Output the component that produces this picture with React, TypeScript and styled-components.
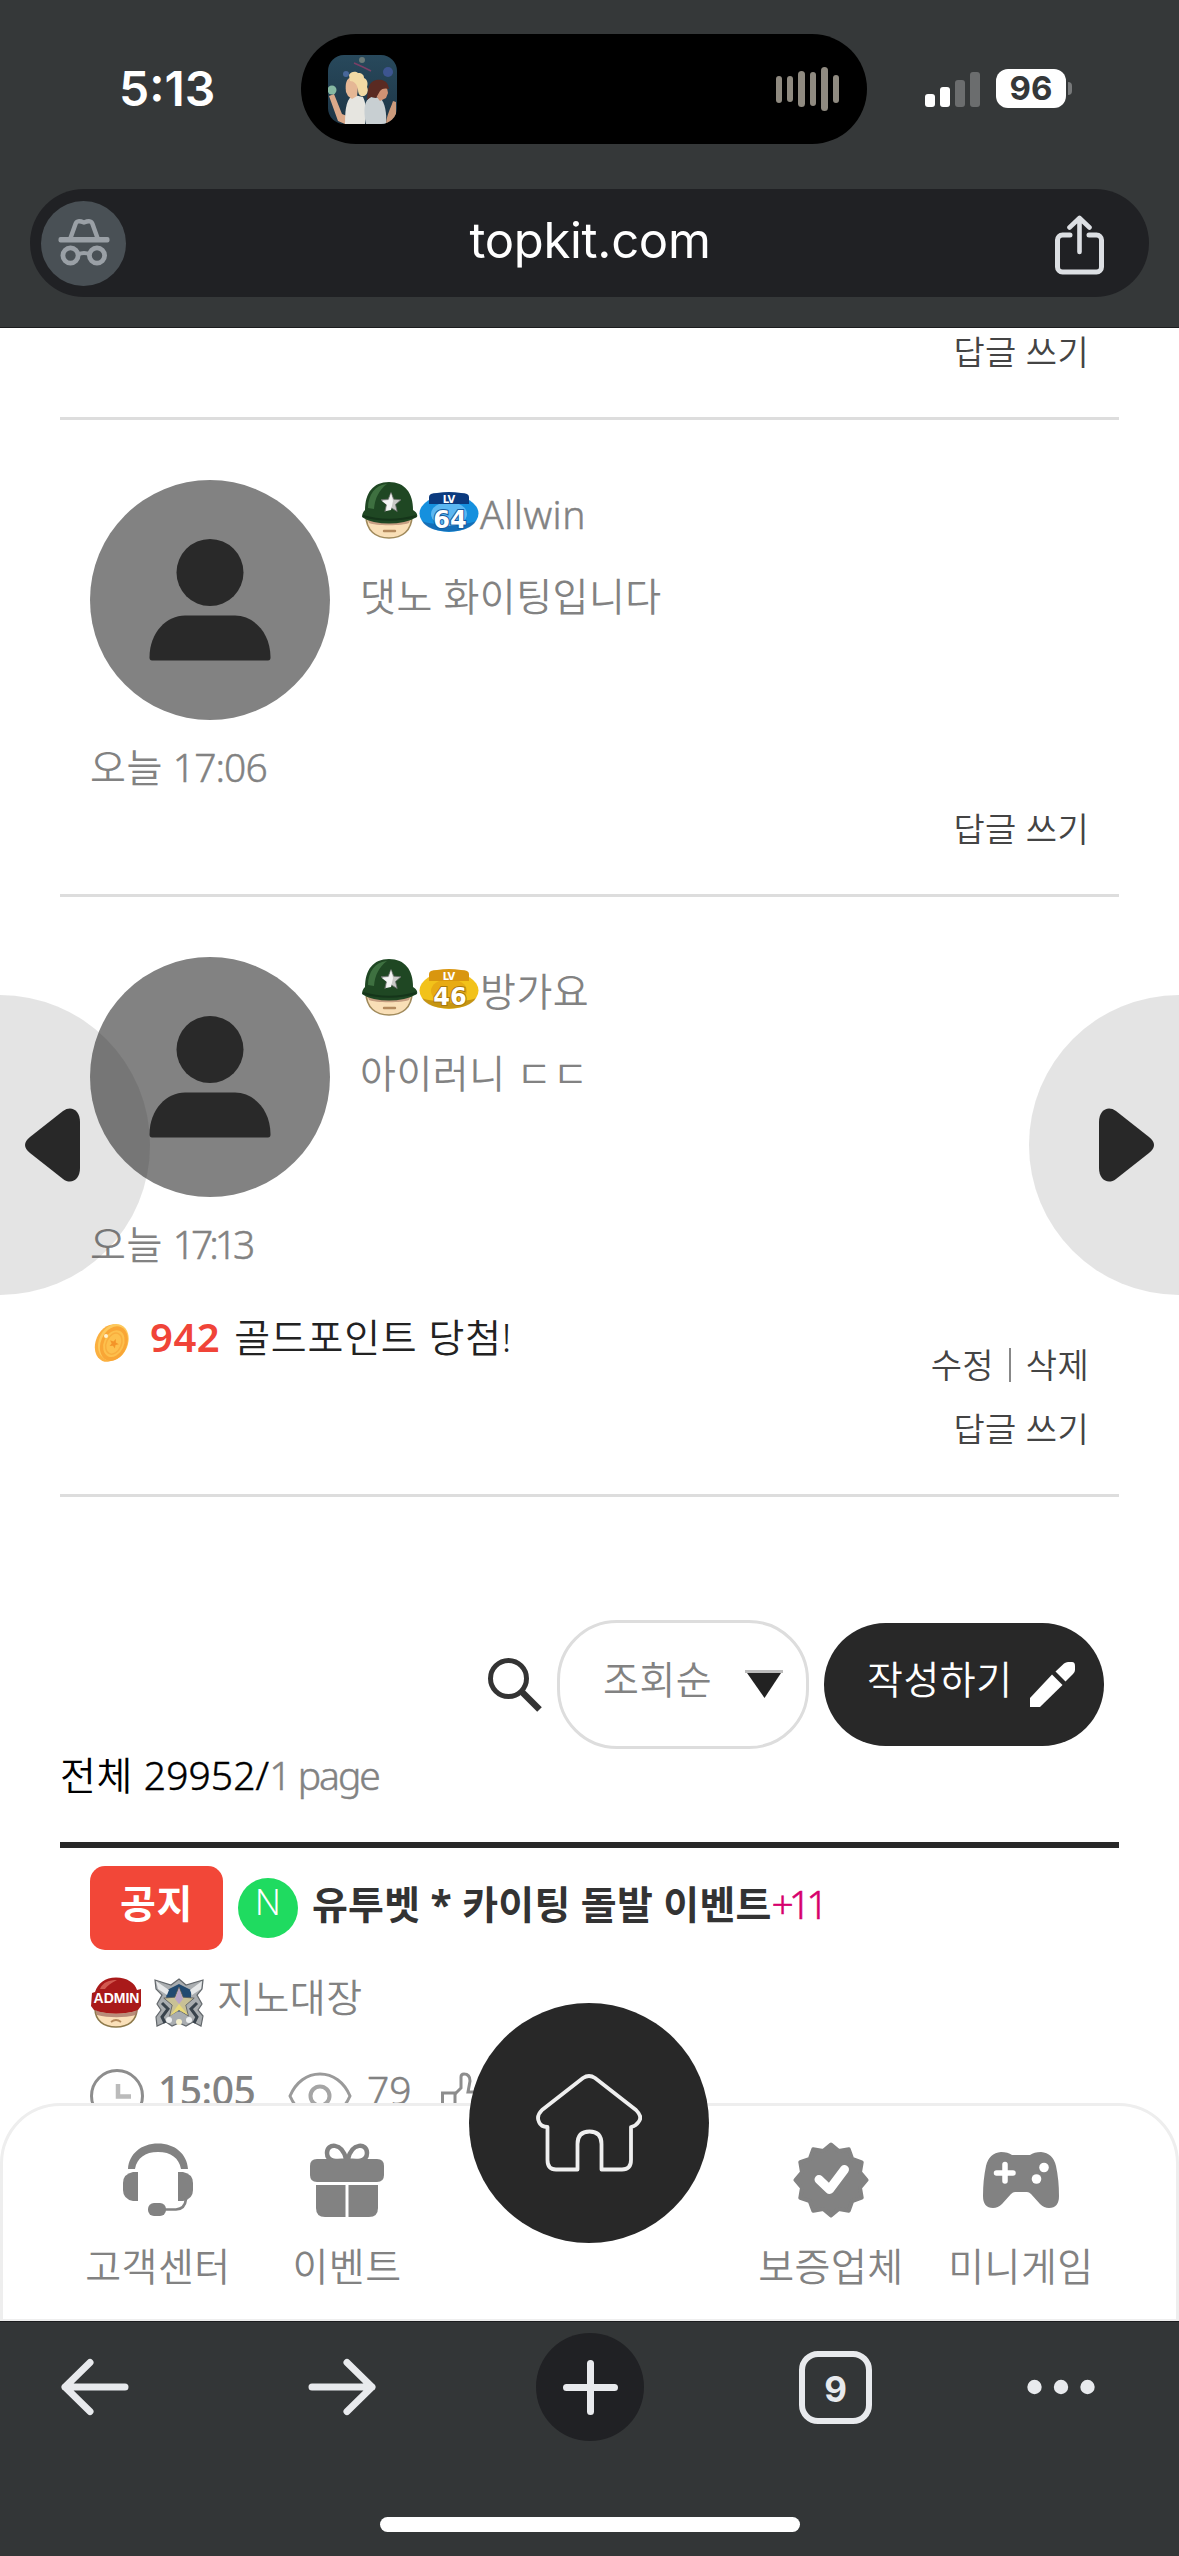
import React from 'react';
import styled, { createGlobalStyle } from 'styled-components';

const Global = createGlobalStyle`
  * { box-sizing: border-box; }
  html, body { margin: 0; padding: 0; background: #fff; }
  body { font-family: "Noto Sans", "Noto Sans CJK KR", sans-serif; }
  svg { display: block; flex: none; }
`;

const UI = `Inter, Roboto, sans-serif`;

const Screen = styled.div`
  position: relative;
  width: 1179px;
  height: 2556px;
  overflow: hidden;
  display: flex;
  flex-direction: column;
  background: #fff;
`;

/* ---------- browser header ---------- */
const Header = styled.header`
  flex: none;
  height: 328px;
  background: #353839;
  border-bottom: 1px solid #1b1c1e;
  padding: 34px 30px 0;
`;
const StatusRow = styled.div`
  display: flex;
  align-items: center;
  height: 110px;
`;
const Clock = styled.div`
  width: 271px;
  padding-left: 89px;
  font: 600 48px/60px ${UI};
  color: #fff;
`;
const Island = styled.div`
  width: 566px;
  height: 110px;
  border-radius: 55px;
  background: #000;
  display: flex;
  align-items: center;
  justify-content: space-between;
  padding: 0 28px 0 27px;
`;
const Wave = styled.div`
  display: flex;
  align-items: center;
  gap: 5px;
`;
const WaveBar = styled.i<{ $h: number }>`
  width: 6.4px;
  height: ${(p) => p.$h}px;
  border-radius: 4px;
  background: #8f8a80;
`;
const Signal = styled.div`
  display: flex;
  align-items: flex-end;
  gap: 5px;
  height: 35px;
  margin-left: 58px;
`;
const SignalBar = styled.i<{ $h: number; $on?: boolean }>`
  width: 10px;
  height: ${(p) => p.$h}px;
  border-radius: 3px;
  background: ${(p) => (p.$on ? '#fff' : '#6b6d6e')};
`;
const Battery = styled.div`
  width: 70px;
  height: 39px;
  margin: -2px 0 0 16px;
  border-radius: 12px;
  background: #fff;
  color: #353839;
  font: 700 33px/39px ${UI};
  text-align: center;
`;
const BatteryTip = styled.i`
  width: 4px;
  height: 13px;
  margin: -2px 0 0 2px;
  border-radius: 0 5px 5px 0;
  background: #77797a;
`;
const UrlBar = styled.div`
  margin-top: 45px;
  height: 108px;
  border-radius: 54px;
  background: #202124;
  display: flex;
  align-items: center;
  justify-content: space-between;
  padding: 0 44px 0 11px;
`;
const Incognito = styled.div`
  width: 85px;
  height: 85px;
  border-radius: 50%;
  background: #495055;
  display: flex;
  align-items: center;
  justify-content: center;
`;
const Url = styled.div`
  font: 400 49px/60px ${UI};
  letter-spacing: -0.3px;
  color: #fff;
  margin-bottom: 4px;
`;

/* ---------- page ---------- */
const Page = styled.main`
  flex: none;
  height: 1993px;
  overflow: hidden;
  padding: 0 60px;
`;
const Label = styled.span<{ $size?: number; $c?: string; $w?: number; $ls?: number; $lh?: number; $up?: number }>`
  display: block;
  white-space: pre;
  font-size: ${(p) => p.$size ?? 39}px;
  font-weight: ${(p) => p.$w ?? 350};
  letter-spacing: ${(p) => p.$ls ?? 0.5}px;
  line-height: ${(p) => (p.$lh ?? 60) - 2 * (p.$up ?? 1.5)}px;
  padding-bottom: ${(p) => 2 * (p.$up ?? 1.5)}px;
  color: ${(p) => p.$c ?? '#828282'};
`;
/* the light Latin cut is thinner than the Hangul beside it */
const Latin = styled(Label)`
  -webkit-text-stroke: 0.5px currentColor;
`;
const Divided = styled.section`
  border-bottom: 3px solid #ddd;
  padding: 0 30px 34px;
`;
const PrevComment = styled(Divided)`
  padding-bottom: 39px;
`;
const Comment = styled(Divided)`
  padding-top: 60px;
`;
const CommentBody = styled.div`
  display: flex;
  gap: 30px;
  height: 240px;
`;
const Avatar = styled.div`
  width: 240px;
  height: 240px;
  border-radius: 50%;
  background: #828282;
  display: flex;
  justify-content: center;
  padding-top: 59px;
`;
const CommentText = styled.div`
  display: flex;
  flex-direction: column;
  gap: 27px;
`;
const Author = styled.div`
  display: flex;
  align-items: center;
  height: 60px;
  padding-left: 1px;
  & > span { padding-top: 10px; }
`;
const Time = styled.div`
  display: flex;
  gap: 10px;
  margin-top: 18px;
  height: 60px;
`;
const Footer = styled.div<{ $top: number }>`
  margin-top: ${(p) => p.$top}px;
  display: flex;
  justify-content: space-between;
  align-items: flex-start;
`;
const Points = styled.div`
  display: flex;
  align-items: center;
  height: 60px;
  padding-left: 3px;
`;
const Won = styled(Label)`
  margin: 0 14px 0 18px;
`;
const Actions = styled.div<{ $top?: number }>`
  margin-left: auto;
  padding-top: ${(p) => p.$top ?? 0}px;
  display: flex;
  flex-direction: column;
  align-items: flex-end;
  gap: 4px;
`;
const EditRow = styled.div`
  display: flex;
  align-items: center;
  height: 60px;
`;
const Bar = styled.i`
  width: 2px;
  height: 34px;
  margin: 0 15px 2px;
  background: #888;
`;
const Action: React.FC<{ children: string; lh?: number }> = ({ children, lh }) => (
  <Label $size={34} $c="#444" $lh={lh} $up={0.5} $ls={0.3}>{children}</Label>
);

const Tools = styled.div`
  margin-top: 123px;
  display: flex;
  justify-content: flex-end;
  align-items: center;
  gap: 15px;
  height: 129px;
  padding-right: 15px;
`;
const Select = styled.div`
  width: 252px;
  height: 129px;
  border: 3px solid #ddd;
  border-radius: 60px;
  display: flex;
  align-items: center;
  justify-content: space-between;
  padding: 0 23px 0 43px;
  & > span { margin-top: -10px; }
`;
const WriteButton = styled.div`
  width: 280px;
  height: 123px;
  border-radius: 62px;
  background: #282828;
  display: flex;
  align-items: center;
  justify-content: space-between;
  padding: 0 29px 0 43px;
  & > span { margin-top: -10px; }
`;
const Count = styled.div`
  display: flex;
  height: 52px;
`;
const Total = styled(Label)`
  margin-right: 11px;
`;
const Post = styled.article`
  margin-top: 41px;
  border-top: 6px solid #282828;
  padding: 18px 30px 0;
`;
const PostTitle = styled.div`
  display: flex;
  align-items: center;
  height: 84px;
`;
const Notice = styled.div`
  width: 133px;
  height: 84px;
  border-radius: 15px;
  background: #f24738;
  display: flex;
  justify-content: center;
  padding-top: 8px;
`;
const NewMark = styled.div`
  width: 60px;
  height: 60px;
  margin: 0 14px 0 15px;
  border-radius: 50%;
  background: #1fdb60;
  display: flex;
  justify-content: center;
`;
const TitleText = styled.div`
  display: flex;
  margin-top: -7px;
`;
const PostAuthor = styled.div`
  display: flex;
  align-items: center;
  margin-top: 27px;
  height: 51px;
  padding-left: 1px;
  gap: 12px;
  & > span { margin-top: -10px; }
`;
const Stats = styled.div`
  display: flex;
  margin-top: 41px;
  height: 54px;
`;
const Posted = styled(Label)`
  width: 108px;
  margin-left: 14px;
`;

/* ---------- overlays ---------- */
const SideArrow = styled.div<{ $right?: boolean }>`
  position: absolute;
  top: 995px;
  ${(p) => (p.$right ? 'right: -150px;' : 'left: -150px;')}
  width: 300px;
  height: 300px;
  border-radius: 50%;
  background: rgba(40, 40, 40, 0.125);
  display: flex;
  align-items: center;
  justify-content: ${(p) => (p.$right ? 'flex-start' : 'flex-end')};
  padding: 0 70px;
`;
const SiteNav = styled.nav`
  position: absolute;
  left: 0;
  top: 2103px;
  width: 1179px;
  height: 218px;
  background: #fff;
  border: 3px solid #eee;
  border-bottom-width: 2px;
  border-radius: 60px 60px 0 0;
  display: flex;
  justify-content: space-between;
  padding: 36px 60px 0 61px;
`;
const NavGroup = styled.div<{ $gap: number }>`
  display: flex;
  gap: ${(p) => p.$gap}px;
`;
const NavItem = styled.div<{ $w: number }>`
  width: ${(p) => p.$w}px;
  display: flex;
  flex-direction: column;
  align-items: center;
  gap: 19px;
`;
const HomeButton = styled.div`
  position: absolute;
  left: 469px;
  top: 2003px;
  width: 240px;
  height: 240px;
  border-radius: 50%;
  background: #282828;
  display: flex;
  align-items: center;
  justify-content: center;
`;

/* ---------- browser footer ---------- */
const BrowserBar = styled.footer`
  flex: none;
  height: 235px;
  background: #333637;
  border-top: 1px solid #1b1c1e;
  display: flex;
  flex-direction: column;
  align-items: center;
`;
const BrowserTools = styled.div`
  width: 100%;
  height: 108px;
  margin-top: 11px;
  padding-left: 60px;
  display: flex;
  align-items: center;
  gap: 155px;
`;
const ArrowSvg = styled.svg<{ $after: number }>`
  margin-right: ${(p) => p.$after}px;
`;
const PlusCircle = styled.div`
  width: 108px;
  height: 108px;
  border-radius: 50%;
  background: #202124;
  display: flex;
  align-items: center;
  justify-content: center;
`;
const Tabs = styled.div`
  width: 73px;
  height: 73px;
  border: 6px solid #e8eaed;
  border-radius: 19px;
  color: #e8eaed;
  font: 700 35px/64px ${UI};
  text-align: center;
`;
const HomeIndicator = styled.div`
  width: 420px;
  height: 15px;
  margin-top: 76px;
  border-radius: 8px;
  background: #fff;
`;

/* ---------- drawings ---------- */
const AlbumArt = () => (
  <svg width="69" height="69" viewBox="0 0 69 69">
    <defs>
      <clipPath id="art"><rect width="69" height="69" rx="16" /></clipPath>
      <linearGradient id="sky" x1="0" y1="0" x2="0" y2="1">
        <stop offset="0" stopColor="#28495c" /><stop offset="1" stopColor="#1d3546" />
      </linearGradient>
    </defs>
    <g clipPath="url(#art)">
      <rect width="69" height="69" fill="url(#sky)" />
      <circle cx="34" cy="5" r="3" fill="#6b7a78" />
      <circle cx="60" cy="17" r="5" fill="#3d5590" />
      <circle cx="18" cy="19" r="3" fill="#48679a" />
      <path d="M26 8l9 4 8 4" stroke="#7b3f66" strokeWidth="1.6" fill="none" />
      <path d="M1 41l5-2 8 20 5 2-2 8-7-3z" fill="#dba98a" />
      <circle cx="4" cy="35" r="4.5" fill="#86b8a2" />
      <path d="M17 69c0-18 2-26 9-29l9 2c4 8 3 18 2 27z" fill="#e6e5e0" />
      <path d="M38 69c-3-14-2-24 5-27l9 1c5 4 7 16 6 26z" fill="#c8cfd2" />
      <path d="M58 69c1-10 4-14 7-23l3 1v21z" fill="#cc9a7b" />
      <path d="M18 37c-1-8 0-14 6-15l7 2-2 17-5 3-4-3z" fill="#e5b795" />
      <path d="M21 20c2-4 7-4 9-2 4 0 6 2 6 5 4 2 4 6 3 9 2 4 0 8-3 9-5 1-6-3-6-7-1-5-4-8-8-8z" fill="#f1d9a4" />
      <path d="M48 33h11l1 5-2 5-6 3-4-5z" fill="#cf9274" />
      <path d="M39 45c1-11 1-18 9-20 7-1 12 1 13 9-3-1-7-1-9 2l-4 7-5-1z" fill="#5a2a22" />
    </g>
  </svg>
);

const IncognitoIcon = () => (
  <svg width="52" height="50" viewBox="0 0 52 50" fill="none" stroke="#9aa0a6">
    <path d="M12.500 20l5-14c1-3 3.500-3.500 8.500-1.500 5-2 7.500-1.500 8.500 1.500l5 14" strokeWidth="4.400" strokeLinejoin="round" />
    <rect x="0.500" y="19" width="51" height="5.500" rx="2" fill="#9aa0a6" stroke="none" />
    <circle cx="12.500" cy="37.500" r="7.600" strokeWidth="4.800" />
    <circle cx="39" cy="37.500" r="7.600" strokeWidth="4.800" />
    <path d="M20 36.500c4-2 8-2 12 0" strokeWidth="4" />
  </svg>
);

const ShareSvg = styled.svg`margin-top: 4px;`;
const ShareIcon = () => (
  <ShareSvg width="51" height="60" viewBox="0 0 51 60" fill="none" stroke="#dcdfe3" strokeWidth="5" strokeLinecap="round" strokeLinejoin="round">
    <path d="M16 20H8.500a5 5 0 0 0-5 5V52a5 5 0 0 0 5 5H42.500a5 5 0 0 0 5-5V25a5 5 0 0 0-5-5H35" />
    <path d="M25.500 37V4M15.500 12.500L25.500 3l10 9.500" strokeWidth="4.600" />
  </ShareSvg>
);

const Person = () => (
  <svg width="122" height="122" viewBox="0 0 122 122" fill="#292929">
    <circle cx="61" cy="33.500" r="33.500" />
    <path d="M3 121.500Q.500 121.500.500 118.500C.500 93 18 76.500 36 76.500H86c18 0 35.500 16.500 35.500 42q0 3-2.500 3z" />
  </svg>
);

const Star: React.FC<{ cx: number; cy: number; r: number; fill: string; stroke?: string }> = ({ cx, cy, r, fill, stroke }) => {
  const pts = Array.from({ length: 10 }, (_, i) => {
    const a = -Math.PI / 2 + (i * Math.PI) / 5;
    const q = i % 2 ? r * 0.45 : r;
    return `${(cx + q * Math.cos(a)).toFixed(1)},${(cy + q * Math.sin(a)).toFixed(1)}`;
  }).join(' ');
  return <polygon points={pts} fill={fill} stroke={stroke} strokeWidth="0.8" />;
};

const SoldierIcon = () => (
  <svg width="57" height="58" viewBox="0 0 57 58">
    <path d="M5 34c0 16 10 23 23 23s23-7 23-23z" fill="#f9dfb7" stroke="#a08a5c" strokeWidth="1.600" />
    <path d="M6 36h44l-2 6c-6 3-34 3-40 0z" fill="#b58a72" opacity="0.75" />
    <path d="M4 29C4 12 12 1 28 1s24 11 24 28c3 2 5 4 4 7-4 2-8 4-13 5-10 2-20 2-30 0-5-1-9-3-12-5 0-3 1-5 3-7z" fill="#1f4723" />
    <path d="M7 27C7 14 14 4 26 3 18 9 14 17 13 28z" fill="#3e7040" />
    <path d="M2 35c16 5 36 5 53 0" stroke="#15351a" strokeWidth="2" fill="none" />
    <Star cx={30} cy={22} r={10.5} fill="#c9c9c7" stroke="#6b6f6c" />
    <path d="M30 12l2 8-2 9-5 1 1-6-5-4 7-1z" fill="#f4f4f4" />
    <path d="M23 50h11" stroke="#b48a5e" strokeWidth="2.400" strokeLinecap="round" />
  </svg>
);

const LevelSvg = styled.svg`
  margin: 4px 1px 0 1px;
`;
const LevelIcon: React.FC<{ level: number; dark: string; mid: string; light: string; edge: string }> = ({ level, dark, mid, light, edge }) => (
  <LevelSvg width="60" height="40" viewBox="0 0 60 40">
    <ellipse cx="30" cy="21.500" rx="29.500" ry="18.500" fill={mid} />
    <path d="M3 29C10 43 50 43 57 29C45 34 15 34 3 29z" fill={edge} opacity="0.600" />
    <ellipse cx="30" cy="22" rx="18" ry="12" fill={light} />
    <path d="M10 12V5Q10 1 18 1Q30-1 42 1Q50 1 50 5V12z" fill={dark} />
    <text x="30" y="10.500" textAnchor="middle" fontFamily="DejaVu Sans, sans-serif" fontWeight="700" fontSize="10" fill="#fff">LV</text>
    <text x="31" y="35.500" textAnchor="middle" fontFamily="DejaVu Sans, sans-serif" fontWeight="700" fontSize="24" fill="#fff" stroke={edge} strokeWidth="2" paintOrder="stroke">{level}</text>
  </LevelSvg>
);

const CoinSvg = styled.svg`margin-top: 10px;`;
const Coin = () => (
  <CoinSvg width="39" height="42" viewBox="0 0 39 42">
    <g transform="rotate(24 19.500 21)">
      <ellipse cx="17.500" cy="22" rx="14.500" ry="19.500" fill="#fbb040" />
      <ellipse cx="20" cy="20" rx="14.500" ry="19" fill="#fdc95c" />
      <ellipse cx="21" cy="21" rx="13" ry="18" fill="#f9a636" />
      <ellipse cx="21" cy="21" rx="10" ry="14" fill="#fdc04d" />
      <ellipse cx="21" cy="21" rx="7.500" ry="11" fill="none" stroke="#f9ae3e" strokeWidth="1.500" />
      <Star cx={21} cy={21} r={5} fill="#f49428" />
    </g>
    <circle cx="13" cy="14" r="2" fill="#fff3d0" />
  </CoinSvg>
);

const SearchIcon = () => (
  <svg width="54" height="54" viewBox="0 0 54 54" fill="none" stroke="#333">
    <circle cx="20.500" cy="20.500" r="18" strokeWidth="5" />
    <path d="M34.500 34.500L51.500 51.500" strokeWidth="6.500" />
  </svg>
);

const DownArrow = () => (
  <svg width="38" height="29" viewBox="0 0 38 29">
    <path d="M1 1.500H37L19.500 28z" fill="#222" />
    <rect x="0" y="0" width="38" height="3" fill="#bbb" />
  </svg>
);

const Pencil = () => (
  <svg width="45" height="45" viewBox="0 0 45 45" fill="#fff">
    <path d="M0 45V36L22 12.500L32.500 23L10 45z" />
    <path d="M25.500 9.500L34 1.500Q36 0 38 0H42Q45 0 45 4V8Q45 10 43 12L35.500 19.500z" />
  </svg>
);

const AdminIcon = () => (
  <svg width="51" height="51" viewBox="0 0 51 51">
    <path d="M4 31c0 13 9 19 21 19s21-6 21-19z" fill="#fae0b9" stroke="#8e7a4c" strokeWidth="1.600" />
    <path d="M4 15C7 6 14 .500 25 .500S44 6 46 13l4-1v17l-3 4c-12 5-32 5-44 0l-3-4 1-13z" fill="#a91a1a" />
    <path d="M9 12C12 5 18 3 26 3c-6 3-10 6-12 9z" fill="#d15a50" />
    <path d="M4 33c12 5 30 5 43 0l-2 5c-12 3-27 3-39 0z" fill="#a8786a" opacity="0.800" />
    <text x="25.500" y="26" textAnchor="middle" fontFamily="Liberation Sans, sans-serif" fontWeight="700" fontSize="14" fill="#fff">ADMIN</text>
    <path d="M20 45q5-4 10 0" stroke="#b48a5e" strokeWidth="1.800" fill="none" />
  </svg>
);

const MedalIcon = () => (
  <svg width="51" height="49" viewBox="0 0 51 49">
    <path d="M25 1l7 6 17-5-1 9-5 6 5 9-4 6 5 6-2 10-8-4-7 4-7-3-7 3-6-4-9 4-1-9 5-7-4-6 5-9L2 11 1 2l16 5z" fill="#a9adb0" stroke="#63686c" strokeWidth="1.200" />
    <path d="M13 12l12-6 12 6v9L25 34 12 21z" fill="#224a70" />
    <path d="M2 3l13 9-2 5-9-6zM48 3L36 12l2 5 9-6z" fill="#e6e8e9" />
    <path d="M8 25l6 6-6 8 3 6M43 25l-6 6 6 8-3 6" stroke="#39434c" strokeWidth="3" fill="none" />
    <Star cx={25} cy={25} r={16} fill="#c9c196" stroke="#55585c" />
    <path d="M25 10l4 11-4 5-4-5z" fill="#b8a4c8" />
    <path d="M25 26l9 11-9-5-9 6z" fill="#e9da78" />
    <circle cx="15" cy="42" r="3" fill="#eef0f1" /><circle cx="25" cy="44" r="3" fill="#f4efcc" /><circle cx="35" cy="42" r="3" fill="#eef0f1" />
  </svg>
);

const ClockIcon = () => (
  <svg width="54" height="54" viewBox="0 0 54 54" fill="none" stroke="#8d8d8d">
    <circle cx="27" cy="27" r="25.500" strokeWidth="3" />
    <path d="M28 15V27.500H41" stroke="#bbb" strokeWidth="4.500" />
  </svg>
);

const EyeSvg = styled.svg`margin: 3px 15px 0 22px;`;
const EyeIcon = () => (
  <EyeSvg width="64" height="48" viewBox="0 0 64 48" fill="none" stroke="#9a9a9a" strokeWidth="3">
    <path d="M2 24C8 10 19 2 32 2s24 8 30 22C56 38 45 46 32 46S8 38 2 24z" />
    <circle cx="32" cy="24" r="9.500" strokeWidth="4" stroke="#a5a5a5" />
  </EyeSvg>
);

const ThumbSvg = styled.svg`margin: 3px 0 0 29px;`;
const ThumbIcon = () => (
  <ThumbSvg width="54" height="54" viewBox="0 0 54 54" fill="none" stroke="#8d8d8d" strokeWidth="3">
    <path d="M1.500 21H14V50H1.500z" />
    <path d="M14 22L20 16V5Q20 2 23 2Q29 2 29 9L27 20H48Q52 20 51 25L46 46Q45 50 41 50H14" />
  </ThumbSvg>
);

const Triangle: React.FC<{ flip?: boolean }> = ({ flip }) => (
  <svg width="55" height="74" viewBox="0 0 55 74">
    <path transform={flip ? 'translate(55 0) scale(-1 1)' : undefined} d="M55 14V60C55 72 46 77 38 71L5 45Q-5 37 5 29L38 3C46-3 55 2 55 14z" fill="#282828" />
  </svg>
);

const HomeIcon = () => (
  <svg width="106" height="98" viewBox="0 0 106 98" fill="none" stroke="#efefef" strokeWidth="3.800" strokeLinejoin="round">
    <path d="M47 4Q53 0 59 4L100 36Q107 43 102.500 48Q100 52 95 53V86Q95 95.500 86 95.500H65.500V70Q65.500 57.500 53.500 57.500T41.500 70V95.500H20Q11.500 95.500 11.500 86V53Q5 53 3 48Q0 42 6 36z" />
  </svg>
);

const HeadsetIcon = () => (
  <svg width="76" height="76" viewBox="0 0 76 76" fill="#828282">
    <path d="M8 27C9 12 21 1.500 38 1.500S67 12 68 27H61C59 16 51 10 38 10S17 16 15 27z" />
    <path d="M18 30V59H13Q3 57 3 48V41Q3 32 13 30z" />
    <path d="M58 30V59H63Q73 57 73 48V41Q73 32 63 30z" />
    <path d="M66 57Q65 67 56 67.500H44" fill="none" stroke="#828282" strokeWidth="2.600" />
    <rect x="28" y="61" width="18" height="13" rx="6" />
  </svg>
);

const GiftIcon = () => (
  <svg width="76" height="76" viewBox="0 0 76 76" fill="#828282">
    <path d="M37 18C29 20 18 20 18 11C18 1 33 0 37 17M39 17C43 0 58 1 58 11C58 20 47 20 39 18" fill="none" stroke="#828282" strokeWidth="4.500" />
    <path d="M8 17H68Q75 17 75 24V33Q75 40 68 40H8Q1 40 1 33V24Q1 17 8 17z" />
    <path d="M7 43H36.500V75H16Q7 75 7 66z" />
    <path d="M39.500 43H69V66Q69 75 60 75H39.500z" />
  </svg>
);

const VerifiedIcon = () => {
  const n = 12;
  const pts = Array.from({ length: n * 2 }, (_, i) => {
    const a = -Math.PI / 2 + (i * Math.PI) / n;
    const r = i % 2 ? 30 : 35.5;
    return `${(38 + r * Math.cos(a)).toFixed(1)},${(38 + r * Math.sin(a)).toFixed(1)}`;
  }).join(' ');
  return (
    <svg width="76" height="76" viewBox="0 0 76 76">
      <polygon points={pts} fill="#828282" stroke="#828282" strokeWidth="4" strokeLinejoin="round" />
      <path d="M26 37.500L36.500 47.500L51.500 27.500" fill="none" stroke="#fff" strokeWidth="9" strokeLinecap="round" strokeLinejoin="round" />
    </svg>
  );
};

const GamepadIcon = () => (
  <svg width="76" height="76" viewBox="0 0 76 76">
    <path d="M18 10Q25 10 29 13H47Q51 10 58 10Q70 11 73 24Q76 38 76 54Q76 66 66 66Q61 66 57 62L48 52Q46 50 44 50H32Q30 50 28 52L19 62Q15 66 10 66Q0 66 0 54Q0 38 3 24Q6 11 18 10z" fill="#828282" />
    <path d="M22 22.500V39M13.500 31H30" stroke="#fff" strokeWidth="5.500" strokeLinecap="round" />
    <circle cx="61" cy="25.500" r="4.800" fill="#fff" /><circle cx="53.500" cy="37" r="4.800" fill="#fff" />
  </svg>
);

const Arrow: React.FC<{ forward?: boolean }> = ({ forward }) => (
  <ArrowSvg $after={forward ? 4 : 24} width="69" height="58" viewBox="0 0 69 58" fill="none" stroke="#e8eaed" strokeWidth="7" strokeLinecap="round" strokeLinejoin="round">
    <g transform={forward ? 'translate(69 0) scale(-1 1)' : undefined}>
      <path d="M65 29H5M30 4.500L5 29L30 53.500" />
    </g>
  </ArrowSvg>
);

const Plus = () => (
  <svg width="57" height="57" viewBox="0 0 57 57" stroke="#e8eaed" strokeWidth="7" strokeLinecap="round">
    <path d="M28.500 4.500V52.500M4.500 28.500H52.500" />
  </svg>
);

const Dots = () => (
  <svg width="68" height="16" viewBox="0 0 68 16" fill="#e8eaed">
    <circle cx="7.500" cy="8" r="7.200" /><circle cx="34" cy="8" r="7.200" /><circle cx="60.500" cy="8" r="7.200" />
  </svg>
);

export default function App() {
  return (
    <Screen>
      <Global />
      <Header>
        <StatusRow>
          <Clock>5:13</Clock>
          <Island>
            <AlbumArt />
            <Wave>
              {[27, 26, 36, 34, 44, 28].map((h, i) => <WaveBar key={i} $h={h} />)}
            </Wave>
          </Island>
          <Signal>
            <SignalBar $h={13} $on /><SignalBar $h={20} $on /><SignalBar $h={27} /><SignalBar $h={35} />
          </Signal>
          <Battery>96</Battery>
          <BatteryTip />
        </StatusRow>
        <UrlBar>
          <Incognito><IncognitoIcon /></Incognito>
          <Url>topkit.com</Url>
          <ShareIcon />
        </UrlBar>
      </Header>

      <Page>
        <PrevComment>
          <Actions><Action lh={50}>답글 쓰기</Action></Actions>
        </PrevComment>

        <Comment>
          <CommentBody>
            <Avatar><Person /></Avatar>
            <CommentText>
              <Author>
                <SoldierIcon />
                <LevelIcon level={64} dark="#0b3a7e" mid="#1590de" light="#5cb8f2" edge="#145a9e" />
                <Latin>Allwin</Latin>
              </Author>
              <Label>댓노 화이팅입니다</Label>
            </CommentText>
          </CommentBody>
          <Time><Label>오늘</Label><Latin $ls={-0.9}>17:06</Latin></Time>
          <Footer $top={2}>
            <Actions><Action>답글 쓰기</Action></Actions>
          </Footer>
        </Comment>

        <Comment>
          <CommentBody>
            <Avatar><Person /></Avatar>
            <CommentText>
              <Author>
                <SoldierIcon />
                <LevelIcon level={46} dark="#d9960f" mid="#f2c21a" light="#e8ab14" edge="#a8770c" />
                <Label>방가요</Label>
              </Author>
              <Label>아이러니 ㄷㄷ</Label>
            </CommentText>
          </CommentBody>
          <Time><Label>오늘</Label><Latin $ls={-4}>17:13</Latin></Time>
          <Footer $top={33}>
            <Points>
              <Coin />
              <Won $w={600} $c="#f04438" $size={40}>942</Won>
              <Label $c="#222" $ls={0.8}>골드포인트 당첨!</Label>
            </Points>
            <Actions $top={28}>
              <EditRow><Action>수정</Action><Bar /><Action>삭제</Action></EditRow>
              <Action>답글 쓰기</Action>
            </Actions>
          </Footer>
        </Comment>

        <Tools>
          <SearchIcon />
          <Select><Label>조회순</Label><DownArrow /></Select>
          <WriteButton><Label $c="#fff">작성하기</Label><Pencil /></WriteButton>
        </Tools>
        <Count>
          <Total $c="#000" $lh={52} $up={0.5}>전체</Total>
          <Latin $c="#000" $lh={52} $up={0.5} $ls={0.1}>29952/</Latin>
          <Latin $lh={52} $up={0.5} $ls={-2}>1 page</Latin>
        </Count>

        <Post>
          <PostTitle>
            <Notice><Label $w={700} $c="#fff">공지</Label></Notice>
            <NewMark><Label $size={36} $c="#fff" $lh={50}>N</Label></NewMark>
            <TitleText>
              <Label $w={700} $c="#333" $ls={0.2}>유투벳 * 카이팅 돌발 이벤트</Label>
              <Latin $c="#d6006d" $ls={-5}>+11</Latin>
            </TitleText>
          </PostTitle>
          <PostAuthor>
            <AdminIcon />
            <MedalIcon />
            <Label>지노대장</Label>
          </PostAuthor>
          <Stats>
            <ClockIcon />
            <Posted $w={500} $lh={44} $ls={-0.5}>15:05</Posted>
            <EyeIcon />
            <Latin $lh={44} $ls={0}>79</Latin>
            <ThumbIcon />
          </Stats>
        </Post>
      </Page>

      <BrowserBar>
        <BrowserTools>
          <Arrow />
          <Arrow forward />
          <PlusCircle><Plus /></PlusCircle>
          <Tabs>9</Tabs>
          <Dots />
        </BrowserTools>
        <HomeIndicator />
      </BrowserBar>

      <SideArrow><Triangle /></SideArrow>
      <SideArrow $right><Triangle flip /></SideArrow>

      <SiteNav>
        <NavGroup $gap={22}>
          <NavItem $w={188}><HeadsetIcon /><Label>고객센터</Label></NavItem>
          <NavItem $w={146}><GiftIcon /><Label>이벤트</Label></NavItem>
        </NavGroup>
        <NavGroup $gap={0}>
          <NavItem $w={190}><VerifiedIcon /><Label>보증업체</Label></NavItem>
          <NavItem $w={190}><GamepadIcon /><Label>미니게임</Label></NavItem>
        </NavGroup>
      </SiteNav>
      <HomeButton><HomeIcon /></HomeButton>
    </Screen>
  );
}
